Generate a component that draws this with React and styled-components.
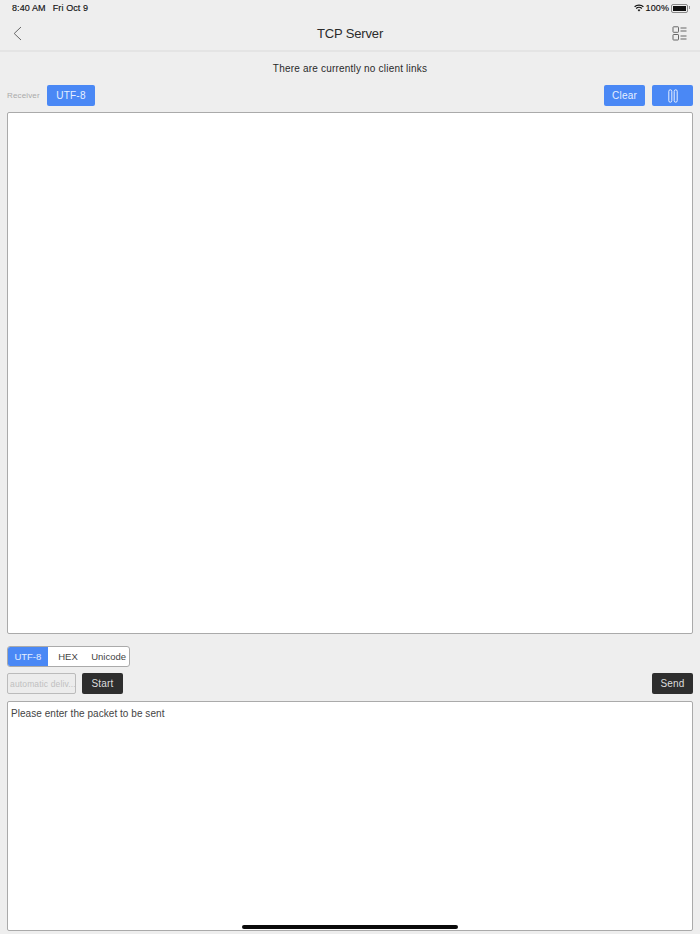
import React from "react";
import styled, { createGlobalStyle } from "styled-components";

const Global = createGlobalStyle`
  html, body { margin: 0; padding: 0; background: #eeeeee; }
  body { font-family: "Liberation Sans", Arial, sans-serif; color: #222; }
`;
const Page = styled.div`
  width: 700px; height: 934px; background: #eeeeee; display: flex; flex-direction: column; position: relative; overflow: hidden;
`;
const StatusBar = styled.div`
  height: 16px; padding: 0 10px 0 12px; display: flex; align-items: center; justify-content: space-between;
  font-size: 9px; color: #111; box-sizing: border-box; letter-spacing: 0.1px; -webkit-text-stroke: 0.15px #111;
`;
const StatusLeft = styled.div` display: flex; gap: 7px; `;
const StatusRight = styled.div` display: flex; align-items: center; gap: 2px; `;
const Battery = styled.div`
  width: 13px; height: 5px; border: 1px solid #888; border-radius: 2px; padding: 1px; box-sizing: content-box; position: relative;
  background: #111; background-clip: content-box; margin-right: 2px;
  &::after { content: ""; position: absolute; right: -3px; top: 1px; width: 1px; height: 3px; background: #999; }
`;
const NavBar = styled.div`
  height: 34px; display: flex; align-items: center; justify-content: space-between; padding: 0 13px;
  border-bottom: 2px solid #e4e4e4;
`;
const NavSide = styled.div` width: 16px; display: flex; justify-content: ${p => (p.$end ? "flex-end" : "flex-start")}; `;
const Title = styled.div` font-size: 13px; color: #2b2b2b; letter-spacing: -0.15px; `;
const Notice = styled.div`
  height: 33px; display: flex; align-items: center; justify-content: center; font-size: 10px; color: #2a2a2a; letter-spacing: 0.2px;
`;
const ReceiverRow = styled.div`
  display: flex; align-items: center; height: 21px; padding: 0 7px; gap: 7px;
`;
const Label = styled.span` font-size: 8px; color: #aaaaaa; width: 33px; white-space: nowrap; letter-spacing: 0.15px; `;
const Spacer = styled.div` flex: 1; `;
const BlueButton = styled.div`
  background: #4a88f5; color: #e6efff; border-radius: 2px; height: 21px; width: ${p => p.$w}px; display: flex; align-items: center; justify-content: center; font-size: 10px; letter-spacing: 0.2px;
`;
const TextPanel = styled.div`
  margin: ${p => p.$m}; height: ${p => p.$h}px; background: #fff; border: 1px solid #aaaaaa; border-radius: 2px; box-sizing: border-box;
  padding: 6px 3px; font-size: 10px; color: #444; letter-spacing: 0.05px; flex-shrink: 0;
`;
const Segmented = styled.div`
  margin: 0 0 0 7px; width: 123px; height: 21px; display: flex; background: #fff; border: 1px solid #aaaaaa; border-radius: 3px; box-sizing: border-box; overflow: hidden;
`;
const Segment = styled.div`
  width: ${p => p.$w}px; display: flex; align-items: center; justify-content: center; font-size: 9.5px;
  background: ${p => (p.$active ? "#4a88f5" : "transparent")}; color: ${p => (p.$active ? "#e6efff" : "#444")};
`;
const SendRow = styled.div` margin-top: 6px; height: 21px; padding: 0 7px; display: flex; align-items: center; gap: 6px; `;
const AutoField = styled.div`
  width: 69px; height: 21px; box-sizing: border-box; border: 1px solid #bbbbbb; border-radius: 2px; font-size: 8.5px; color: #c0c0c0; display: flex; align-items: center; padding-left: 2px; white-space: nowrap; overflow: hidden; background: #ececec; letter-spacing: 0.15px;
`;
const DarkButton = styled.div`
  width: 41px; height: 21px; border-radius: 2px; background: #2e2e2e; color: #ddd; font-size: 10px; display: flex; align-items: center; justify-content: center; letter-spacing: 0.2px;
`;
const HomeIndicator = styled.div`
  position: absolute; left: 242px; top: 925px; width: 216px; height: 4px; border-radius: 2px; background: #0a0a0a;
`;

export default function App() {
  return (
    <Page>
      <Global />
      <StatusBar>
        <StatusLeft><span>8:40 AM</span><span>Fri Oct 9</span></StatusLeft>
        <StatusRight>
          <svg width="10" height="8" viewBox="0 0 10 8" fill="none" stroke="#111" strokeWidth="1.3">
            <path d="M.6 2.8C3 .6 7 .6 9.4 2.8" />
            <path d="M2.2 4.4C3.7 3.1 6.3 3.1 7.8 4.4" />
            <path d="M5 7.6 3.6 6c.8-.6 2-.6 2.8 0z" fill="#111" stroke="none" />
          </svg>
          <span>100%</span>
          <Battery />
        </StatusRight>
      </StatusBar>
      <NavBar>
        <NavSide>
          <svg width="9" height="15" viewBox="0 0 9 15" fill="none" stroke="#666" strokeWidth="1">
            <path d="M8 1 1.2 7.5 8 14" />
          </svg>
        </NavSide>
        <Title>TCP Server</Title>
        <NavSide $end>
          <svg width="15" height="15" viewBox="0 0 15 15" fill="none" stroke="#666" strokeWidth="1">
            <rect x="1" y=".8" width="5.5" height="5.5" rx=".6" />
            <rect x="1" y="8.5" width="5.5" height="5.5" rx=".6" />
            <path d="M8.5 2h6M8.5 5h6M8.5 10h6M8.5 13h6" />
          </svg>
        </NavSide>
      </NavBar>
      <Notice>There are currently no client links</Notice>
      <ReceiverRow>
        <Label>Receiver</Label>
        <BlueButton $w={48}>UTF-8</BlueButton>
        <Spacer />
        <BlueButton $w={41}>Clear</BlueButton>
        <BlueButton $w={41}>
          <svg width="10" height="14" viewBox="0 0 10 14" fill="none" stroke="#e6efff" strokeWidth="1">
            <rect x=".8" y=".8" width="3" height="12.4" rx="1.5" />
            <rect x="6.2" y=".8" width="3" height="12.4" rx="1.5" />
          </svg>
        </BlueButton>
      </ReceiverRow>
      <TextPanel $m="6px 7px 12px" $h={522} />
      <Segmented>
        <Segment $active $w={40}>UTF-8</Segment>
        <Segment $w={41}>HEX</Segment>
        <Segment $w={41}>Unicode</Segment>
      </Segmented>
      <SendRow>
        <AutoField>automatic deliv...</AutoField>
        <DarkButton>Start</DarkButton>
        <Spacer />
        <DarkButton>Send</DarkButton>
      </SendRow>
      <TextPanel $m="7px 7px 0" $h={230}>Please enter the packet to be sent</TextPanel>
      <HomeIndicator />
    </Page>
  );
}
